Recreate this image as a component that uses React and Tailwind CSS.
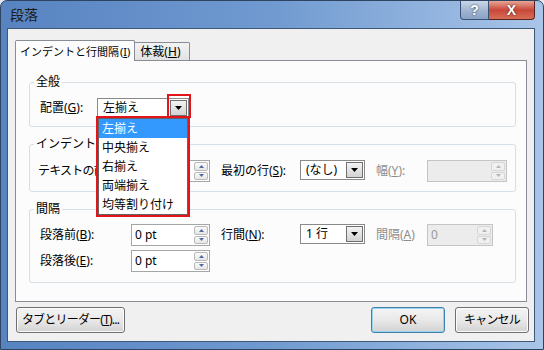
import React from 'react';

const ComboArrow = () => (
  <svg width="7" height="4" viewBox="0 0 7 4">
    <path d="M0 0h7L3.5 4z" fill="#000" />
  </svg>
);

const SpinArrow = ({ up, disabled }) => (
  <svg width="5" height="3" viewBox="0 0 5 3">
    <path d={up ? 'M2.5 0L5 3H0z' : 'M0 0h5L2.5 3z'} fill={disabled ? '#b4b4b4' : '#4f6aa0'} />
  </svg>
);

const Combo = ({ value, w }) => (
  <div className={`${w} h-[20px] flex border border-[#8a8a8a] bg-white`}>
    <div className="flex-1 flex items-center pl-[5px] leading-none whitespace-nowrap">{value}</div>
    <div className="w-[17px] m-[1px] border border-[#6f6f6f] bg-gradient-to-b from-[#f3f3f3] to-[#d3d3d3] flex items-center justify-center">
      <ComboArrow />
    </div>
  </div>
);

const Spinner = ({ value, w, disabled }) => (
  <div
    className={`${w} h-[22px] flex border ${
      disabled ? 'border-[#c4c4c4] bg-[#ececec] text-[#9a9a9a]' : 'border-[#a6a6a6] bg-white'
    }`}
  >
    <div className="flex-1 flex items-center pl-[3px] leading-none whitespace-nowrap">{value}</div>
    <div className="w-[16px] flex flex-col gap-[1px] p-[1px]">
      <div
        className={`flex-1 flex items-center justify-center border rounded-[2px] ${
          disabled ? 'border-[#d6d6d6] bg-[#f0f0f0]' : 'border-[#b9b9b9] bg-gradient-to-b from-[#fafafa] to-[#e6e6e6]'
        }`}
      >
        <SpinArrow up disabled={disabled} />
      </div>
      <div
        className={`flex-1 flex items-center justify-center border rounded-[2px] ${
          disabled ? 'border-[#d6d6d6] bg-[#f0f0f0]' : 'border-[#b9b9b9] bg-gradient-to-b from-[#fafafa] to-[#e6e6e6]'
        }`}
      >
        <SpinArrow disabled={disabled} />
      </div>
    </div>
  </div>
);

const Label = ({ w, gray, children, className = '' }) => (
  <span
    className={`${w} h-[22px] flex items-center whitespace-nowrap leading-none ${gray ? 'text-[#8d8d8d]' : ''} ${className}`}
  >
    {children}
  </span>
);

const Group = ({ title, className = '', children }) => (
  <fieldset className={`border border-[#d5dfe5] rounded-[3px] ${className}`}>
    <legend className="ml-[4px] px-[2px] leading-[16px]">{title}</legend>
    {children}
  </fieldset>
);

const Button = ({ children, w, focus }) => (
  <div
    className={`${w} h-[26px] rounded-[3px] border flex items-center justify-center leading-none whitespace-nowrap bg-gradient-to-b from-[#f4f4f4] via-[#e9e9e9] to-[#d2d2d2] ${
      focus ? 'border-[#3c7fb1] shadow-[inset_0_0_0_1px_#9ed3f0]' : 'border-[#707070] shadow-[inset_0_0_0_1px_#fbfbfb]'
    }`}
  >
    {children}
  </div>
);

export default function App() {
  const items = ['左揃え', '中央揃え', '右揃え', '両端揃え', '均等割り付け'];

  return (
    <div className="relative w-[544px] h-[350px] overflow-hidden bg-[#dfe7f1] font-['Noto_Sans','Noto_Sans_CJK_JP',sans-serif] text-[12px] text-black">
      <div className="w-full h-full flex flex-col rounded-t-[7px] border border-[#2f4461] bg-gradient-to-r from-[#5783c1] via-[#709ad0] to-[#a9c5e8]">
        {/* title bar */}
        <div className="h-[27px] flex items-start pl-[9px]">
          <span className="mt-[5px] text-[14px] leading-[18px] text-[#1b1b1b]">段落</span>
          <div className="ml-auto mr-[8px] flex">
            <div className="w-[29px] h-[19px] border border-t-0 border-[#3a5276] rounded-bl-[4px] bg-gradient-to-b from-[#c9d6e8] via-[#a3b6d2] to-[#8aa2c6] flex items-center justify-center font-['Liberation_Sans',sans-serif] font-bold text-[14px] text-white [text-shadow:0_0_2px_#1f2f45]">
              ?
            </div>
            <div className="w-[46px] h-[19px] border border-t-0 border-l-0 border-[#5a2320] rounded-br-[4px] bg-gradient-to-b from-[#e7a595] via-[#c8473a] to-[#d66d55] flex items-center justify-center font-['Liberation_Sans',sans-serif] font-bold text-[14px] text-white [text-shadow:0_0_2px_#3a0e0a]">
              X
            </div>
          </div>
        </div>

        {/* client area */}
        <div className="ml-[6px] mr-[8px] h-[314px] border border-[#3f5877] bg-[#f0f0f0] pt-[11px] px-[7px] flex flex-col">
          {/* tabs */}
          <div className="flex items-end h-[20px]">
            <div className="relative z-10 h-[21px] mb-[-1px] border border-b-0 border-[#898c95] rounded-t-[2px] bg-[#fcfcfc] flex items-center px-[4px] whitespace-nowrap leading-none text-[11px]">
              <span>インデントと行間隔</span>
              <span className="ml-[1px]">
                (<u>I</u>)
              </span>
            </div>
            <div className="w-[55px] h-[18px] border border-l-0 border-b-0 border-[#898c95] rounded-tr-[2px] bg-gradient-to-b from-[#f3f3f3] to-[#e2e2e2] flex items-center pl-[5px] whitespace-nowrap leading-none">
              体裁(<u>H</u>)
            </div>
          </div>

          {/* panel */}
          <div className="h-[242px] border border-[#898c95] bg-[#fcfcfc] pt-[13px] pl-[13px] pr-[10px]">
            <Group title="全般">
              <div className="flex items-start pl-[10px] pt-[8px] pb-[8px]">
                <span className="w-[57px] h-[20px] flex items-center leading-none whitespace-nowrap">
                  配置(<u>G</u>):
                </span>
                <Combo value="左揃え" w="w-[92px]" />
              </div>
            </Group>

            <Group title="インデント" className="mt-[9px]">
              <div className="flex items-start pl-[8px] pt-[8px] pb-[9px]">
                <Label w="w-[93px]" className="tracking-[-0.8px]">
                  テキストの前(<u>R</u>):
                </Label>
                <Spinner value="" w="w-[79px]" />
                <Label w="w-[79px]" className="ml-[11px]">
                  最初の行(<u>S</u>):
                </Label>
                <Combo value="(なし)" w="w-[65px]" />
                <Label w="w-[51px]" gray className="ml-[11px]">
                  幅(<u>Y</u>):
                </Label>
                <Spinner value="" w="w-[80px]" disabled />
              </div>
            </Group>

            <Group title="間隔" className="mt-[9px]">
              <div className="flex flex-col gap-[4px] pl-[10px] pt-[7px] pb-[10px]">
                <div className="flex items-start">
                  <Label w="w-[91px]">
                    段落前(<u>B</u>):
                  </Label>
                  <Spinner value="0 pt" w="w-[79px]" />
                  <Label w="w-[79px]" className="ml-[11px]">
                    行間(<u>N</u>):
                  </Label>
                  <Combo value="1 行" w="w-[65px]" />
                  <Label w="w-[51px]" gray className="ml-[11px]">
                    間隔(<u>A</u>)
                  </Label>
                  <Spinner value="0" w="w-[66px]" disabled />
                </div>
                <div className="flex items-start">
                  <Label w="w-[91px]">
                    段落後(<u>E</u>):
                  </Label>
                  <Spinner value="0 pt" w="w-[79px]" />
                </div>
              </div>
            </Group>
          </div>

          {/* buttons */}
          <div className="mt-[5px] flex ml-[1px] mr-[-2px]">
            <Button w="w-[109px]">
              <span className="tracking-[-0.8px]">
                タブとリーダー(<u>T</u>)...
              </span>
            </Button>
            <div className="ml-auto">
              <Button w="w-[74px]" focus>
                OK
              </Button>
            </div>
            <div className="ml-[10px]">
              <Button w="w-[74px]">
                <span className="tracking-[-0.8px]">キャンセル</span>
              </Button>
            </div>
          </div>
        </div>
      </div>

      {/* red highlight around the dropdown button */}
      <div className="absolute left-[167px] top-[94px] w-[24px] h-[24px] border-2 border-[#e3151b]" />

      {/* open dropdown list */}
      <div className="absolute left-[96px] top-[116px] w-[94px] h-[101px] border-2 border-[#e3151b] bg-white">
        <div className="h-full border border-[#646464] flex flex-col">
          {items.map((item, i) => (
            <div
              key={item}
              className={`h-[19px] flex items-center pl-[3px] leading-none whitespace-nowrap ${
                i === 0 ? 'bg-[#3399ff] text-white' : ''
              }`}
            >
              {item}
            </div>
          ))}
        </div>
      </div>
    </div>
  );
}
